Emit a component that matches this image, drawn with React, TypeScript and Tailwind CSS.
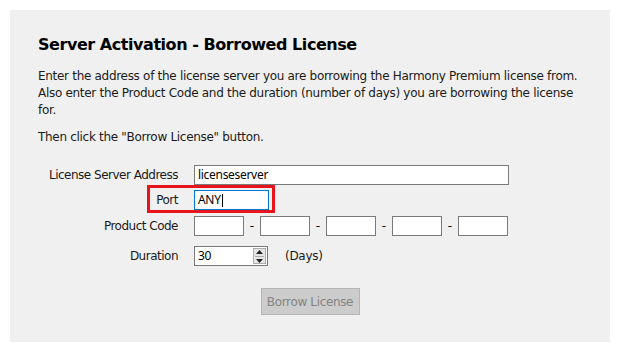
import React from 'react';

const font = { fontFamily: '"DejaVu Sans", "Noto Sans", sans-serif' };
const inputFont = { fontFamily: '"Noto Sans", "DejaVu Sans", sans-serif' };

const Field: React.FC<{ label: string; children: React.ReactNode; className?: string }> = ({ label, children, className }) => (
    <div className={`flex items-center ${className ?? ''}`}>
        <div className="w-[140px] text-right text-[12px] tracking-[-0.5px] text-[#1a1a1a]">{label}</div>
        <div className="ml-[16px] flex items-center">{children}</div>
    </div>
);

const App: React.FC = () => {
    return (
        <div className="w-[620px] h-[352px] bg-white p-[10px]" style={font}>
            <div className="h-[332px] bg-[#f0f0f0] pl-[28px] pr-[20px] pt-[25px] flex flex-col">
                {/* Header */}
                <h1 className="text-[16px] leading-[20px] font-bold tracking-[-0.45px] text-black">
                    Server Activation - Borrowed License
                </h1>

                <p className="mt-[13px] text-[12px] leading-[17px] tracking-[-0.3px] text-[#1a1a1a] whitespace-nowrap">
                    Enter the address of the license server you are borrowing the Harmony Premium license from.
                    <br />
                    Also enter the Product Code and the duration (number of days) you are borrowing the license
                    <br />
                    for.
                </p>
                <p className="mt-[10px] text-[12px] leading-[17px] tracking-[-0.3px] text-[#1a1a1a]">
                    Then click the "Borrow License" button.
                </p>

                {/* Form */}
                <div className="mt-[19px] flex flex-col">
                    <Field label="License Server Address">
                        <div className="w-[315px] h-[20px] bg-white border border-[#7a7a7a] pl-[3px] text-[12px] leading-[18px] tracking-[-0.3px] text-black" style={inputFont}>
                            licenseserver
                        </div>
                    </Field>

                    <Field label="Port" className="mt-[5px] relative">
                        <div className="w-[75px] h-[20px] bg-white border border-[#0078d7] pl-[3px] text-[12px] leading-[18px] tracking-[-0.3px] text-black flex items-center" style={inputFont}>
                            ANY<span className="w-px h-[13px] bg-black ml-px" />
                        </div>
                        <span className="absolute left-[109px] top-[-5px] w-[128px] h-[28px] border-[3px] border-[#e8141b] pointer-events-none" />
                    </Field>

                    <Field label="Product Code" className="mt-[6px]">
                        {[0, 1, 2, 3, 4].map(i => (
                            <React.Fragment key={i}>
                                {i > 0 && <span className="w-[16px] text-center text-[12px] text-black">-</span>}
                                <div className="w-[50px] h-[20px] bg-white border border-[#7a7a7a]" />
                            </React.Fragment>
                        ))}
                    </Field>

                    <Field label="Duration" className="mt-[10px]">
                        <div className="w-[74px] h-[20px] bg-white border border-[#7a7a7a] pl-[3px] pr-px flex items-center justify-between text-[12px] tracking-[-0.3px] text-black" style={inputFont}>
                            <span>30</span>
                            <div className="w-[13px] h-[16px] bg-[#e6e6e6] border border-[#adadad] flex flex-col items-center justify-center gap-[2px]">
                                <svg width="7" height="4" viewBox="0 0 7 4"><path d="M3.5 0 L7 4 L0 4 Z" fill="#222" /></svg>
                                <div className="w-[9px] h-px bg-[#adadad]" />
                                <svg width="7" height="4" viewBox="0 0 7 4"><path d="M0 0 L7 0 L3.5 4 Z" fill="#222" /></svg>
                            </div>
                        </div>
                        <span className="ml-[17px] text-[12px] tracking-[-0.3px] text-[#1a1a1a]">(Days)</span>
                    </Field>
                </div>

                <div className="mt-[22px] flex justify-center pr-[8px]">
                    <button className="w-[99px] h-[27px] bg-[#cccccc] border border-[#b5b5b5] text-[12px] tracking-[-0.35px] text-[#838383]">
                        Borrow License
                    </button>
                </div>
            </div>
        </div>
    );
};

export default App;
